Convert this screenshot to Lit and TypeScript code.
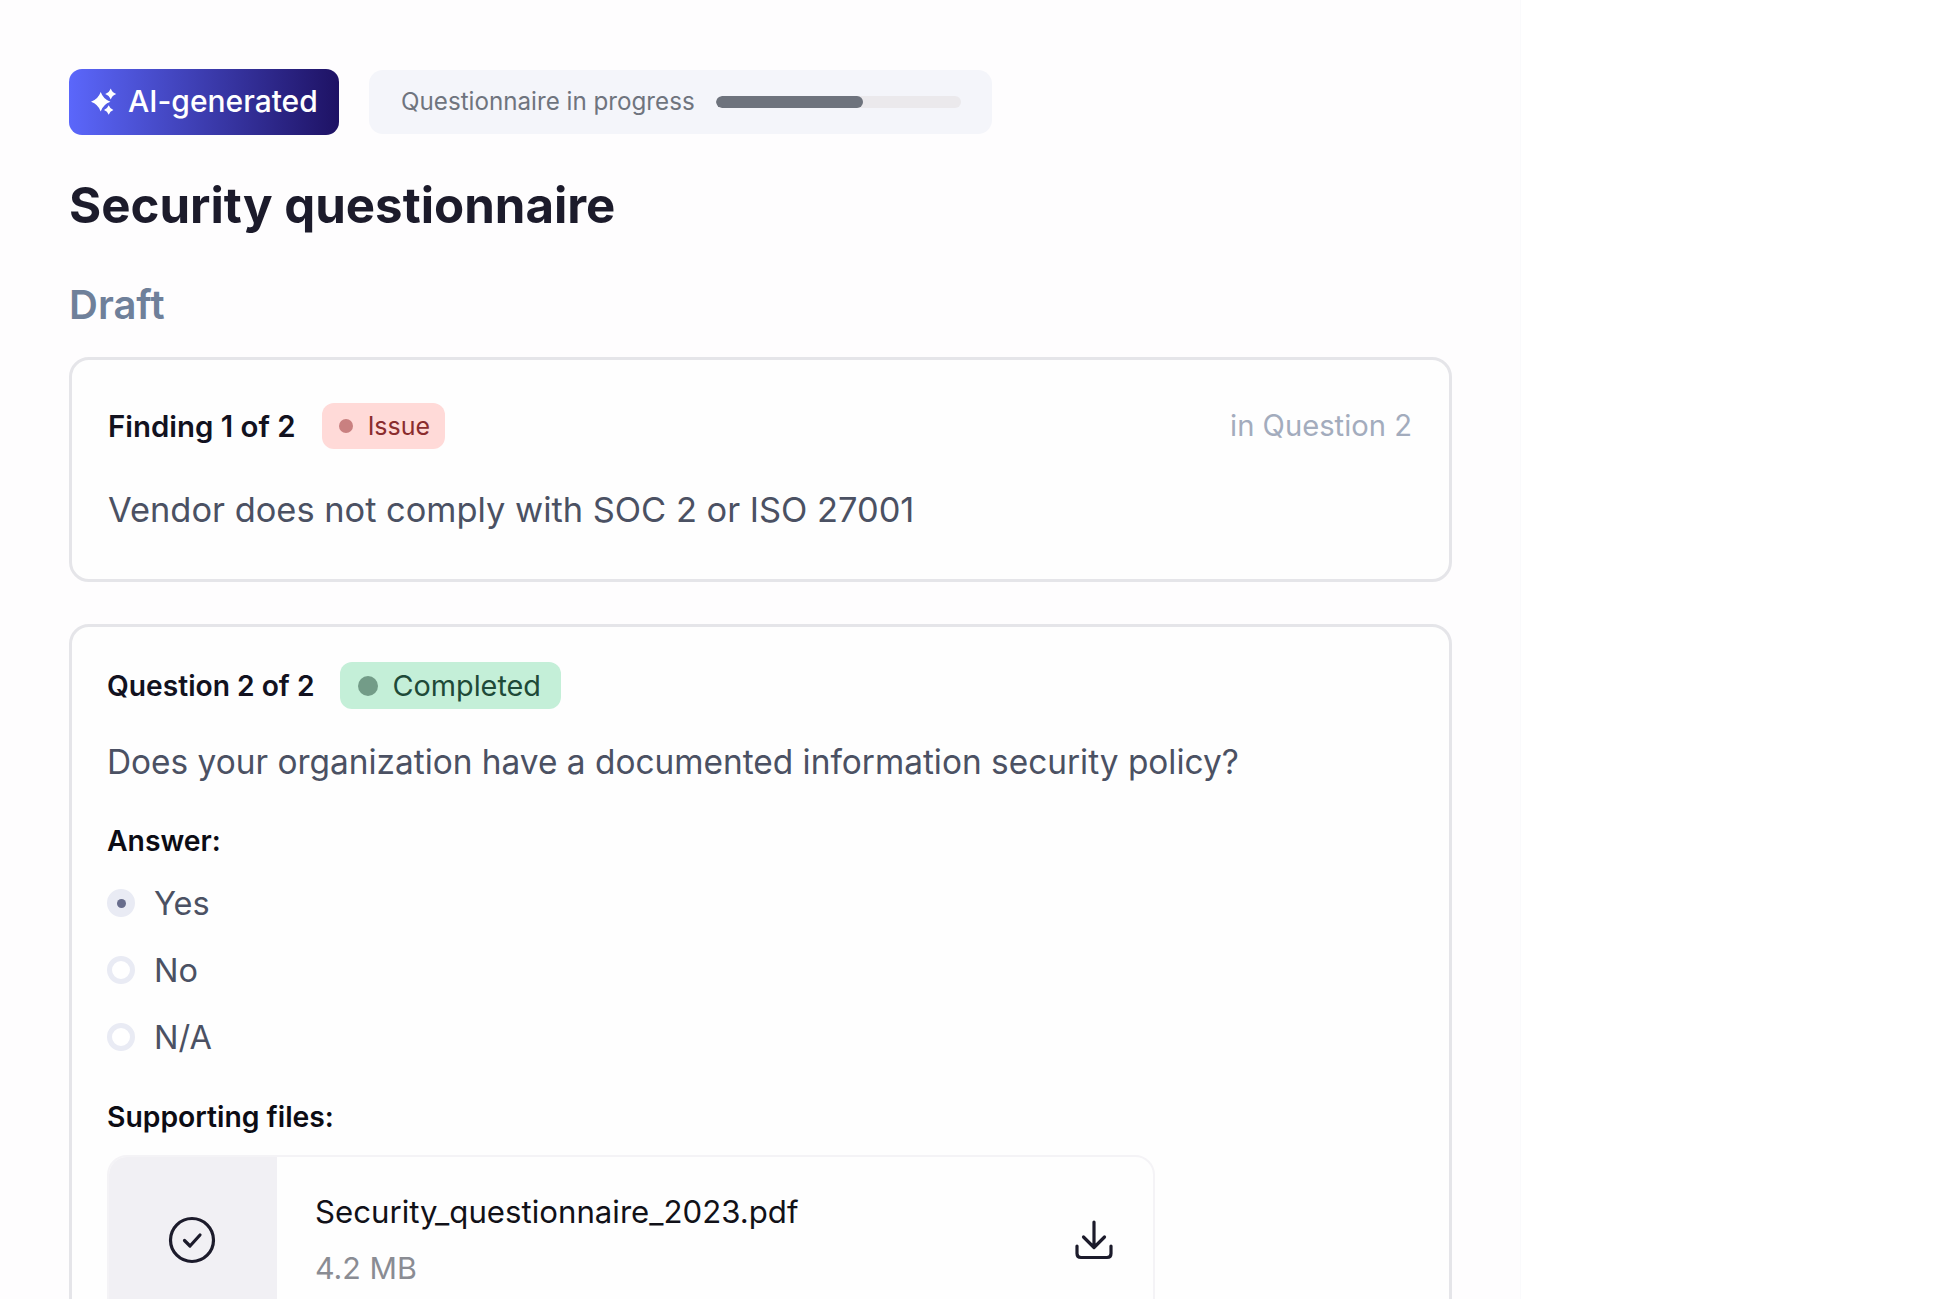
import { LitElement, html, css } from "lit";
import { customElement } from "lit/decorators.js";

const star = (cx: number, cy: number, r: number) => {
  const k = r * 0.26;
  return `M${cx} ${cy - r}Q${cx + k} ${cy - k} ${cx + r} ${cy}Q${cx + k} ${cy + k} ${cx} ${cy + r}Q${cx - k} ${cy + k} ${cx - r} ${cy}Q${cx - k} ${cy - k} ${cx} ${cy - r}Z`;
};

@customElement("app-root")
export class AppRoot extends LitElement {
  static styles = css`
    :host { display: block; height: 1299px; overflow: hidden; background: #fff; font-family: Inter, "Liberation Sans", sans-serif; }
    .page { box-sizing: border-box; width: 1521px; height: 1299px; overflow: hidden; padding: 69px 68px 0 69px; background: #fefdfe; border-right: 1px solid #fafafc; }
    .top { display: flex; align-items: center; gap: 30px; height: 66px; }
    .ai { box-sizing: border-box; width: 270px; height: 66px; border-radius: 13px; display: flex; align-items: center; gap: 10px; padding-left: 21px; color: #fff; font-size: 30px; line-height: 62px; font-weight: 500; background: linear-gradient(90deg, #5b67fb 0%, #1e1264 100%); }
    .ai span { margin-top: -2px; }
    .ai svg { width: 28px; height: 28px; flex: none; }
    .progress { box-sizing: border-box; width: 623px; height: 64px; border-radius: 14px; background: #f4f5fa; display: flex; align-items: center; gap: 21px; padding-left: 32px; color: #6f747e; font-size: 24.200px; }
    .progress span { margin-top: -2px; }
    .track { width: 245px; height: 12px; border-radius: 6px; background: #ebe9ec; overflow: hidden; }
    .fill { height: 100%; border-radius: 6px; background: #6e737d; }
    h1 { margin: 41px 0 0; font-size: 49.200px; line-height: 58px; font-weight: 700; color: #1c1b2b; }
    h2 { margin: 48px 0 0; font-size: 40px; line-height: 46px; font-weight: 600; color: #6f809a; }
    .card { box-sizing: border-box; width: 1383px; border: 3px solid #e5e5e9; border-radius: 20px; background: #fefefe; }
    .c1 { height: 225px; margin-top: 29px; padding: 43px 37px 0 36px; }
    .c2 { margin-top: 42px; height: 800px; padding: 35px 36px 0 35px; }
    .row { display: flex; align-items: center; }
    .c1 .row { gap: 26px; height: 46px; }
    .c2 .row { gap: 26px; height: 47px; }
    .label { font-weight: 600; color: #12121f; }
    .c1 .label { font-size: 29.400px; }
    .c2 .label { font-size: 28.200px; }
    .badge { display: flex; align-items: center; border-radius: 12px; height: 100%; box-sizing: border-box; }
    .dot { border-radius: 50%; flex: none; }
    .issue { background: #ffdad8; color: #8a2c2e; font-size: 25px; padding: 0 15px 0 17px; gap: 15px; }
    .issue .dot { width: 14px; height: 14px; background: #c98080; }
    .done { background: #c4efd8; color: #1e4a38; font-size: 28.800px; padding: 0 20px 0 18px; gap: 14px; }
    .done .dot { width: 20px; height: 20px; background: #739c88; }
    .where { margin-left: auto; margin-top: -2px; color: #a3acbd; font-size: 29.200px; }
    .text { color: #4b5163; }
    .c1 .text { margin-top: 40px; font-size: 34.400px; line-height: 42px; }
    .c2 .text { margin-top: 33px; font-size: 33.400px; line-height: 40px; }
    .sub { font-size: 28.300px; font-weight: 600; color: #0c0c14; line-height: 36px; }
    .a { margin-top: 41px; }
    .opts { display: flex; flex-direction: column; gap: 27px; margin-top: 24px; }
    .opt { display: flex; align-items: center; gap: 19px; height: 40px; font-size: 32.500px; color: #4b5163; }
    .radio { box-sizing: border-box; width: 28px; height: 28px; border-radius: 50%; border: 5px solid #e9ebf4; background: #fff; display: flex; align-items: center; justify-content: center; }
    .radio.on { background: #e9ebf4; }
    .radio.on i { width: 9px; height: 9px; border-radius: 50%; background: #686d8c; display: block; }
    .s { margin-top: 42px; }
    .file { box-sizing: border-box; margin-top: 20px; width: 1048px; height: 170px; border: 2px solid #f4f3f6; border-radius: 20px; display: flex; overflow: hidden; background: #fefefe; }
    .thumb { width: 170px; background: #f1f0f4; display: flex; align-items: center; justify-content: center; flex: none; margin: -2px 0 -2px -2px; }
    .thumb svg { width: 48px; height: 48px; }
    .meta { flex: 1; padding: 35px 0 0 38px; }
    .name { font-size: 31.200px; line-height: 40px; color: #111118; }
    .size { margin-top: 17px; font-size: 30.400px; line-height: 38px; color: #8a8c93; }
    .dl { width: 38px; height: 40px; margin: 63px 40px 0 0; flex: none; }
  `;

  render() {
    return html`<div class="page">
      <div class="top">
        <div class="ai">
          <svg viewBox="0 0 28 28" fill="#fff"><path d=${star(10.7, 13.7, 9.7)}/><path d=${star(20.7, 6, 5.5)}/><path d=${star(18.7, 22, 4.7)}/></svg>
          <span>AI-generated</span>
        </div>
        <div class="progress">
          <span>Questionnaire in progress</span>
          <div class="track"><div class="fill" style="width:60%"></div></div>
        </div>
      </div>
      <h1>Security questionnaire</h1>
      <h2>Draft</h2>
      <section class="card c1">
        <div class="row">
          <span class="label">Finding 1 of 2</span>
          <span class="badge issue"><span class="dot"></span>Issue</span>
          <span class="where">in Question 2</span>
        </div>
        <div class="text">Vendor does not comply with SOC 2 or ISO 27001</div>
      </section>
      <section class="card c2">
        <div class="row">
          <span class="label">Question 2 of 2</span>
          <span class="badge done"><span class="dot"></span>Completed</span>
        </div>
        <div class="text">Does your organization have a documented information security policy?</div>
        <div class="sub a">Answer:</div>
        <div class="opts">
          <div class="opt"><span class="radio on"><i></i></span>Yes</div>
          <div class="opt"><span class="radio"></span>No</div>
          <div class="opt"><span class="radio"></span>N/A</div>
        </div>
        <div class="sub s">Supporting files:</div>
        <div class="file">
          <div class="thumb">
            <svg viewBox="0 0 48 48" fill="none" stroke="#1c1b2b" stroke-width="3.200"><circle cx="24" cy="24" r="21.500"/><path d="M16.500 24.500l5.500 5.500 10-11" stroke-linecap="round" stroke-linejoin="round"/></svg>
          </div>
          <div class="meta">
            <div class="name">Security_questionnaire_2023.pdf</div>
            <div class="size">4.2 MB</div>
          </div>
          <svg class="dl" viewBox="0 0 38 40" fill="none" stroke="#1c1b2b" stroke-width="3.200" stroke-linecap="round" stroke-linejoin="round"><path d="M19 2v25M8.500 17L19 27.500 29.500 17"/><path d="M2 26v7.500c0 2.500 1.500 4 4 4h26c2.500 0 4-1.500 4-4V26"/></svg>
        </div>
      </section>
    </div>`;
  }
}
